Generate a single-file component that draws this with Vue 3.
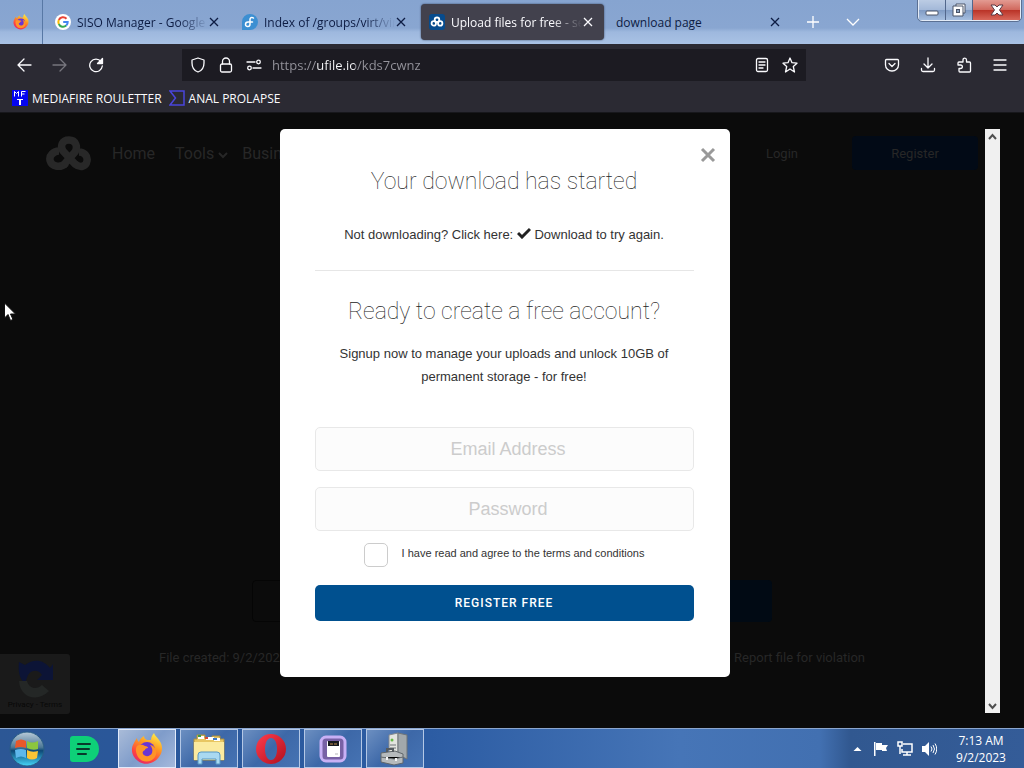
<script setup>
import { ref } from 'vue'

const tabs = [
  { title: 'SISO Manager - Google', icon: 'google' },
  { title: 'Index of /groups/virt/vir', icon: 'fedora' },
  { title: 'Upload files for free - set', icon: 'ufile', active: true },
  { title: 'download page' }
]

const apps = ['firefox', 'explorer', 'opera', 'device', 'server']

const url = ref('https://ufile.io/kds7cwnz')
const email = ref('')
const password = ref('')
const agreed = ref(false)
</script>

<template>
  <div class="desktop">
    <svg class="defs" width="0" height="0" aria-hidden="true">
      <defs>
        <linearGradient id="fire" x1="0.8" y1="0" x2="0.3" y2="1">
          <stop offset="0" stop-color="#fff04a" />
          <stop offset="0.4" stop-color="#ff9a22" />
          <stop offset="0.75" stop-color="#ff4540" />
          <stop offset="1" stop-color="#e62a66" />
        </linearGradient>
        <linearGradient id="orb" x1="0" y1="0" x2="0" y2="1">
          <stop offset="0" stop-color="#b9cbd8" />
          <stop offset="0.45" stop-color="#4d7896" />
          <stop offset="0.55" stop-color="#0d4876" />
          <stop offset="1" stop-color="#45d6fa" />
        </linearGradient>
        <linearGradient id="opera" x1="0" y1="0" x2="1" y2="1">
          <stop offset="0" stop-color="#ff3c4c" />
          <stop offset="1" stop-color="#b0101f" />
        </linearGradient>
        <symbol id="firefox" viewBox="0 0 32 32">
          <path fill="url(#fire)" d="M3 10c1-2 2-4 3-5 0 2 1 3 2 4 1-3 3-5 5-6 0 2 1 3 3 4h4c0-2 1-5 3-7 1 3 3 4 5 7 4 5 4 12 0 17-5 7-15 9-21 4-6-4-8-12-4-18z" />
          <circle cx="16" cy="17" r="8" fill="#6a35d3" />
          <path fill="#ff9427" d="M6 13c3-2 6-1 8 0 2 0 3 1 3 2-2 0-3 1-3 2-2 1-3 2-2 4 2 3 7 3 9-1 1-3 0-6-2-8 6 1 8 7 5 12-4 6-13 6-17 0-2-4-3-8-1-11z" />
        </symbol>
        <symbol id="clouds" viewBox="0 0 46 36">
          <g fill="none" stroke="currentColor" stroke-width="7.5" stroke-linejoin="round">
            <path d="M20 28c-3 3-6 4-10 3-6-1-8-8-4-12 2-2 4-3 7-3" />
            <path d="M17 31l4-5 8-9c3-5 1-12-6-12s-9 6-6 11l12 13c5 4 11 3 12-3 1-5-3-9-8-9" />
          </g>
        </symbol>
      </defs>
    </svg>

    <header class="tabbar">
      <button class="pinned" aria-label="Firefox View"><svg width="16" height="16"><use href="#firefox" /></svg></button>
      <div class="tabs">
        <div v-for="tab in tabs" :key="tab.title" class="tab" :class="{ active: tab.active }">
          <svg v-if="tab.icon === 'google'" class="favicon" viewBox="0 0 16 16">
            <circle cx="8" cy="8" r="8" fill="#fff" />
            <g fill="none" stroke-width="2">
              <path stroke="#ea4335" d="M11.5 4.8A4.7 4.7 0 0 0 3.8 6" />
              <path stroke="#fbbc05" d="M3.8 6a4.7 4.7 0 0 0 0 4" />
              <path stroke="#34a853" d="M3.8 10a4.7 4.7 0 0 0 7.4 1.6" />
              <path stroke="#4285f4" d="M11.2 11.6A4.6 4.6 0 0 0 12.7 8H8.2" />
            </g>
          </svg>
          <svg v-else-if="tab.icon === 'fedora'" class="favicon" viewBox="0 0 16 16">
            <path fill="#3c8fd2" d="M8 0a8 8 0 1 1 0 16H0V8a8 8 0 0 1 8-8z" />
            <path fill="none" stroke="#fff" stroke-width="1.5" stroke-linecap="round" d="M11.5 4C9.5 2.6 8 4 8 5.6v4.6c0 3-4.5 3-4.5.2C3.5 9 4.7 8 6 8h4.5" />
          </svg>
          <svg v-else-if="tab.icon === 'ufile'" class="favicon" viewBox="0 0 16 16">
            <rect width="16" height="16" rx="3" fill="#064b8d" />
            <g fill="none" stroke="#fff" stroke-width="1.8"><circle cx="8" cy="5.8" r="2.3" /><circle cx="4.8" cy="9.4" r="2.2" /><circle cx="11.2" cy="9.4" r="2.2" /></g>
          </svg>
          <span class="tab-title" :class="{ fade: tab.icon }">{{ tab.title }}</span>
          <button class="tab-close" aria-label="Close tab">
            <svg width="10" height="10" viewBox="0 0 10 10"><path d="M1 1l8 8M9 1L1 9" /></svg>
          </button>
        </div>
      </div>
      <button class="tab-tool" aria-label="New tab"><svg width="14" height="14" viewBox="0 0 14 14"><path d="M7 1v12M1 7h12" /></svg></button>
      <button class="tab-tool" aria-label="List all tabs"><svg width="14" height="14" viewBox="0 0 14 14"><path d="M1 4l6 6 6-6" /></svg></button>
      <div class="window-controls">
        <button aria-label="Minimize"><svg width="14" height="14" viewBox="0 0 14 14"><rect x="1" y="8" width="12" height="4" rx="1" fill="#fff" stroke="#4a5468" /></svg></button>
        <button aria-label="Restore">
          <svg width="14" height="14" viewBox="0 0 14 14" fill="#fff" stroke="#4a5468"><path d="M4 1h9v9h-2v3H1V3h3z" /><path fill="none" d="M4 3h7v7" /><rect x="4.5" y="6.5" width="3" height="3" fill="#8ba2c0" /></svg>
        </button>
        <button class="close-window" aria-label="Close"><svg width="14" height="14" viewBox="0 0 14 14"><path fill="#fff" stroke="#5a3a44" d="M1 2h4l2 2 2-2h4L9.5 7l3.5 5H9l-2-2-2 2H1l3.5-5z" /></svg></button>
      </div>
    </header>

    <nav class="toolbar">
      <button class="tool" aria-label="Back"><svg viewBox="0 0 16 16"><path d="M15 8H2M8 2L2 8l6 6" /></svg></button>
      <button class="tool dim" aria-label="Forward"><svg viewBox="0 0 16 16"><path d="M1 8h13M8 2l6 6-6 6" /></svg></button>
      <button class="tool" aria-label="Reload"><svg viewBox="0 0 16 16"><path d="M13 4.5A6.3 6.3 0 1 0 14.3 9" /><path fill="currentColor" d="M14.5 1.5v5h-5z" /></svg></button>
      <div class="urlbar">
        <button class="mini" aria-label="Tracking protection"><svg viewBox="0 0 16 16"><path d="M8 1l6 2v3c0 5-3 8-6 9-3-1-6-4-6-9V3z" /></svg></button>
        <button class="mini" aria-label="Site security"><svg viewBox="0 0 16 16"><rect x="2.500" y="7" width="11" height="8" rx="1.500" /><path d="M4.500 7V4.500a3.500 3.500 0 0 1 7 0V7" /></svg></button>
        <button class="mini" aria-label="Permissions"><svg viewBox="0 0 16 16"><path d="M1 5h8M7 11h8" /><circle cx="12.5" cy="5" r="1.8" /><circle cx="3.5" cy="11" r="1.8" /></svg></button>
        <input v-model="url" class="url" type="text" aria-label="Address">
        <button class="mini" aria-label="Reader view"><svg viewBox="0 0 16 16"><rect x="2.5" y="1.5" width="11" height="13" rx="1.5" /><path d="M5 5h6M5 8h6M5 11h4" /></svg></button>
        <button class="mini" aria-label="Bookmark"><svg viewBox="0 0 16 16"><path d="M8 1l2 4.7 5 .5-3.700 3.300L12.500 15 8 12l-4.500 3 1.200-5.500L1 6.200l5-.5z" /></svg></button>
      </div>
      <button class="tool" aria-label="Pocket"><svg viewBox="0 0 16 16"><path d="M2.500 2.500h11c.7 0 1 .4 1 1V8a6.500 6 0 0 1-13 0V3.500c0-.6.4-1 1-1z" /><path d="M5 6.500l3 3 3-3" /></svg></button>
      <button class="tool" aria-label="Downloads"><svg viewBox="0 0 16 16"><path d="M8 1v10M4 7l4 4 4-4M1.500 11.500v1.500c0 1 .5 1.500 1.500 1.500h10c1 0 1.500-.5 1.500-1.500v-1.500" /></svg></button>
      <button class="tool" aria-label="Extensions"><svg viewBox="0 0 16 16"><path d="M3 5h4V3c0-2.500 3.500-2.500 3.500 0v2h3c.6 0 1 .4 1 1v8c0 .6-.4 1-1 1H4c-.6 0-1-.4-1-1v-2.500h1.500c2.500 0 2.500-3.500 0-3.500H2V6c0-.6.4-1 1-1z" /></svg></button>
      <button class="tool" aria-label="Menu"><svg viewBox="0 0 16 16"><path d="M2 3h12M2 8h12M2 13h12" /></svg></button>
    </nav>

    <div class="bookmarks">
      <a href="#">
        <svg width="16" height="16" viewBox="0 0 16 16">
          <rect width="16" height="16" fill="#0505f0" />
          <path fill="none" stroke="#fff" stroke-width="1" d="M2.500 6.500v-5l2 2 2-2v5M9.500 6.500v-5h4M9.500 4h3M5 9.500h6" /><path stroke="#fff" stroke-width="2" d="M8 9v6" />
        </svg>
        MEDIAFIRE ROULETTER
      </a>
      <a href="#">
        <svg width="16" height="16" viewBox="0 0 16 16"><path fill="none" stroke="#4a45dc" stroke-width="1.500" d="M1 1h14v14H1l5.500-7z" /></svg>
        ANAL PROLAPSE
      </a>
    </div>

    <main class="page">
      <div class="site">
        <div class="site-nav">
          <svg class="logo" width="46" height="36"><use href="#clouds" /></svg>
          <a href="#" class="home">Home</a>
          <a href="#">Tools <svg width="10" height="8" viewBox="0 0 10 8"><path d="M1 2l4 4 4-4" fill="none" stroke="currentColor" stroke-width="2" /></svg></a>
          <a href="#">Business</a>
          <a href="#" class="login">Login</a>
          <button class="site-register">Register</button>
        </div>
        <div class="site-actions">
          <span class="share"></span>
          <span class="download"></span>
        </div>
        <div class="site-meta">
          <span>File created: 9/2/2023</span>
          <a href="#">Report file for violation</a>
        </div>
        <div class="captcha">
          <svg width="40" height="42" viewBox="0 0 40 42">
            <path fill="#0c1436" d="M4 4l6 3c9-7 19-5 25 3l3-4v16H22l5-5c-3-5-10-6-14 0l-3 8C4 21 3 12 4 4z" />
            <path fill="#242726" d="M4 23h8c2 8 10 9 15 4l7 6c-10 11-29 8-30-10z" />
          </svg>
          <span>Privacy - Terms</span>
        </div>
      </div>

      <div class="overlay">
        <section class="modal" role="dialog" aria-labelledby="started">
          <button class="modal-close" aria-label="Close dialog"><svg width="16" height="16" viewBox="0 0 16 16"><path d="M2 2l12 12M14 2L2 14" /></svg></button>
          <h2 id="started">Your download has started</h2>
          <p class="again">
            Not downloading? Click here:
            <a href="#"><svg width="14" height="12" viewBox="0 0 14 12"><path d="M1 6l4 4 8-8" /></svg> Download</a> to try again.
          </p>
          <hr>
          <h2>Ready to create a free account?</h2>
          <p class="signup">Signup now to manage your uploads and unlock 10GB of permanent storage - for free!</p>
          <form @submit.prevent>
            <input v-model="email" class="field" type="email" placeholder="Email Address" aria-label="Email Address">
            <input v-model="password" class="field" type="password" placeholder="Password" aria-label="Password">
            <div class="terms">
              <input id="terms" v-model="agreed" type="checkbox">
              <label for="terms">I have read and agree to the terms and conditions</label>
            </div>
            <button class="submit" type="submit">REGISTER FREE</button>
          </form>
        </section>
        <div class="scrollbar">
          <button aria-label="Scroll up"><svg width="9" height="8" viewBox="0 0 9 8"><path d="M1 6l3.500-4L8 6" /></svg></button>
          <button aria-label="Scroll down"><svg width="9" height="8" viewBox="0 0 9 8"><path d="M1 2l3.500 4L8 2" /></svg></button>
        </div>
      </div>
    </main>

    <footer class="taskbar">
      <button class="start" aria-label="Start">
        <svg width="36" height="36" viewBox="0 0 36 36">
          <circle cx="18" cy="18" r="17" fill="url(#orb)" stroke="#295d85" />
          <path fill="#e9582b" d="M7 10q5-3 10 0v7q-5-2-11 0z" />
          <path fill="#8cc63e" d="M18 10q5 3 11 0v8q-5 2-11-1z" />
          <path fill="#5eb8ec" d="M6 19q6-2 11 0v8q-5-3-10 0z" />
          <path fill="#fbc436" d="M18 19q5 3 11 1l-1 7q-5 3-10 0z" />
        </svg>
      </button>
      <button class="pin" aria-label="Notes">
        <svg width="30" height="28" viewBox="0 0 30 28"><path fill="#0ed078" d="M3 1h13a13 13 0 0 1 0 26H3q-3 0-3-3V4q0-3 3-3z" /><path stroke="#08392b" stroke-width="2" stroke-linecap="round" d="M8 9h12M7 14h12M8 19h8" /></svg>
      </button>
      <button v-for="app in apps" :key="app" class="app" :class="{ focused: app === 'firefox' }" :aria-label="app">
        <svg v-if="app === 'firefox'" width="32" height="32"><use href="#firefox" /></svg>
        <svg v-else-if="app === 'explorer'" width="34" height="32" viewBox="0 0 34 32">
          <path fill="#e8c662" stroke="#a88d43" d="M2 6h3V2h8v3h7V3h8v3h4v21H2z" />
          <path fill="#fff" d="M6 3h6v3H6zM14 4h8v3h-8zM22 5h6v3h-6z" />
          <path stroke="#3c9d48" stroke-width="2" d="M6 3h3" /><path stroke="#d94b35" stroke-width="2" d="M13 5h3" /><path stroke="#3c78c4" stroke-width="2" d="M21 6h4" />
          <path fill="#fbea9f" d="M2 9h30v18H2z" />
          <path fill="#a9d9f1" stroke="#5797c3" d="M6 31v-9q0-3 3-3h16q3 0 3 3v9h-4v-5H10v5z" />
        </svg>
        <svg v-else-if="app === 'opera'" width="32" height="32" viewBox="0 0 32 32">
          <path fill="url(#opera)" fill-rule="evenodd" d="M16 1a15 15 0 1 0 0 30 15 15 0 0 0 0-30zm0 4c4 0 6 5 6 11s-2 11-6 11-6-5-6-11 2-11 6-11z" />
        </svg>
        <svg v-else-if="app === 'device'" width="28" height="28" viewBox="0 0 28 28">
          <rect x="2" y="2" width="24" height="24" rx="5" fill="#7861a5" stroke="#c8b0f5" stroke-width="3" />
          <rect x="8" y="6" width="13" height="16" rx="1" fill="#fff" /><rect x="9" y="6" width="11" height="5" fill="#17191e" />
          <path stroke="#c28d4b" d="M11 9h3M15 9h3" /><path stroke="#b7b7ba" d="M16 19h3" />
        </svg>
        <svg v-else width="34" height="34" viewBox="0 0 34 34">
          <path fill="#e3e4df" stroke="#84898d" d="M11 3l9-2v22l-9 2z" /><path fill="#a2a8ab" stroke="#6f7579" d="M20 1l9 2v24l-9-4z" />
          <circle cx="14" cy="8" r="1.5" fill="#65b944" /><path stroke="#6f7579" d="M12 13h6M12 16h6" />
          <path fill="#b6babc" stroke="#60666a" d="M3 21l14-2 8 3v9l-9 2-13-3z" /><path fill="none" stroke="#555b60" stroke-width="2" d="M9 20v-3h6v3" />
          <path stroke="#6c7175" d="M3 25l13 2 9-2" /><path stroke="#f3f3f3" stroke-width="2" d="M9 25v3M18 26v3" />
        </svg>
      </button>
      <div class="tray">
        <button aria-label="Show hidden icons"><svg width="9" height="6" viewBox="0 0 9 6"><path fill="#fff" d="M4.500 1L8.500 5h-8z" /></svg></button>
        <button aria-label="Action Center"><svg width="16" height="16" viewBox="0 0 16 16"><path fill="#fff" d="M1 1h1.500v14H1zM3 2h6v7H3zM9 4h6l-2 3 1 3H9z" /></svg></button>
        <button aria-label="Network"><svg width="16" height="16" viewBox="0 0 16 16" fill="none" stroke="#fff" stroke-width="1.500"><path d="M6 3h9v8H5V8M10 11v3M6 14h8" /><rect x="1" y="1" width="4" height="4" /><path d="M3 5v8" /></svg></button>
        <button aria-label="Volume"><svg width="16" height="16" viewBox="0 0 16 16"><path fill="#fff" d="M1 5h3l4-4v14l-4-4H1z" /><path fill="none" stroke="#fff" d="M10 5.500q2 2.500 0 5M12 4q3 4 0 8M14 2.500q3.500 5.500 0 11" /></svg></button>
        <div class="clock">
          <time>7:13 AM</time>
          <time>9/2/2023</time>
        </div>
      </div>
    </footer>

    <svg class="cursor" width="12" height="20" viewBox="0 0 12 20"><path fill="#fff" stroke="#111" d="M.5 1v15l3.500-3.500L6.500 18.500l2.500-1L6.500 12h5z" /></svg>
  </div>
</template>

<style>
html,
body {
  margin: 0;
  background: #0b0b0b;
}
</style>

<style scoped>
.desktop {
  position: relative;
  display: flex;
  flex-direction: column;
  min-height: 100vh;
  font-family: "Open Sans", "Noto Sans", sans-serif;
  font-size: 12px;
}

.desktop *,
.desktop *::before {
  box-sizing: border-box;
}

.defs { position: absolute; }

button {
  display: flex;
  align-items: center;
  justify-content: center;
  flex: none;
  padding: 0;
  border: 0;
  background: none;
  color: inherit;
  font: inherit;
}

a {
  color: inherit;
  text-decoration: none;
}

svg { flex: none; }

.tabbar {
  display: flex;
  height: 44px;
  background: linear-gradient(#86a4d0, #89a6d1 28px, #9eb8de 32px, #a9c2e5);
  color: #0d1c43;
}

.pinned {
  width: 43px;
  border-right: 1px solid #5878a5;
}

.tabs {
  display: flex;
  gap: 4px;
  flex: 0 1 750px;
  min-width: 0;
  padding: 4px 0 4px 4px;
}

.tab {
  display: flex;
  align-items: center;
  flex: 0 1 183px;
  min-width: 0;
  padding: 0 10px 0 8px;
  border-radius: 4px;
}

.tab.active {
  background: #42414d;
  color: #fbfbfe;
  box-shadow: 0 0 2px #33405c;
}

.favicon {
  width: 16px;
  height: 16px;
  margin-right: 6px;
}

.tab-title {
  flex: 1;
  overflow: hidden;
  white-space: nowrap;
}

.tab-title.fade { mask-image: linear-gradient(to left, transparent, #000 30px); }

.tab-close {
  width: 12px;
  height: 20px;
}

.tab-close path,
.tab-tool path {
  fill: none;
  stroke: currentColor;
  stroke-width: 1.3;
}

.tab-tool {
  width: 40px;
  color: #fff;
}

.window-controls {
  display: flex;
  height: 21px;
  margin: 0 3px 0 auto;
  border: 1px solid #e3ebf7;
  border-top: 0;
  border-radius: 0 0 4px 4px;
  outline: 1px solid #5b7093;
}

.window-controls button {
  width: 27px;
  background: linear-gradient(#bccce4, #a3b8d8 50%, #7f9bc4 50%, #a5bedf);
  border-right: 1px solid #52678c;
}

.window-controls .close-window {
  width: 47px;
  border: 0;
  background: linear-gradient(#e39b92, #d0675c 50%, #b93226 50%, #d8675a);
}

.toolbar {
  display: flex;
  align-items: center;
  height: 42px;
  padding: 0 6px;
  background: #2b2a33;
  color: #fbfbfe;
}

.tool {
  width: 36px;
  height: 32px;
}

.tool.dim { color: #77767e; }

.toolbar svg {
  width: 16px;
  height: 16px;
  fill: none;
  stroke: currentColor;
  stroke-width: 1.3;
  stroke-linecap: round;
  stroke-linejoin: round;
}

.urlbar {
  display: flex;
  align-items: center;
  flex: 1;
  min-width: 0;
  height: 32px;
  margin: 0 68px;
  padding: 0 2px;
  background: #1c1b22;
}

.mini {
  width: 28px;
  height: 28px;
}

.url {
  flex: 1;
  min-width: 0;
  padding: 0 4px;
  border: 0;
  outline: 0;
  /* the domain is lit, scheme and path stay grey */
  background: linear-gradient(to right, #96959d 48px, #fbfbfe 48px 87px, #96959d 87px);
  background-clip: text;
  color: transparent;
  font: 13px "Open Sans", "Noto Sans", sans-serif;
}

.bookmarks {
  display: flex;
  gap: 7px;
  height: 27px;
  padding: 0 12px 2px;
  background: #2b2a33;
  border-bottom: 1px solid #17171b;
  color: #fbfbfe;
}

.bookmarks a {
  display: flex;
  align-items: center;
  gap: 4px;
}

.page {
  position: relative;
  display: flex;
  flex: 1;
  background: #0b0b0b;
}

.site {
  display: flex;
  flex-direction: column;
  flex: 1;
  color: #272727;
  font-family: Roboto, sans-serif;
}

.site-nav {
  display: flex;
  align-items: center;
  gap: 14px;
  padding: 22px 46px 0;
  font-size: 16px;
}

.logo { color: #282828; }

.home { margin: 0 6px; }

.login {
  margin-left: auto;
  margin-right: 40px;
  font-size: 13px;
}

.site-register {
  width: 126px;
  height: 34px;
  border-radius: 4px;
  background: #020a16;
  font-size: 13px;
}

.site-actions {
  display: flex;
  justify-content: space-between;
  margin-top: auto;
  padding: 0 252px;
}

.site-actions span {
  width: 180px;
  height: 42px;
  border-radius: 4px;
}

.share { border: 1px solid #050505; }

.download { background: #010a14; }

.site-meta {
  display: flex;
  justify-content: space-between;
  padding: 28px 159px 63px;
  font-size: 13px;
  line-height: 15px;
}

.captcha {
  position: absolute;
  left: 0;
  bottom: 14px;
  display: flex;
  flex-direction: column;
  align-items: center;
  width: 70px;
  height: 60px;
  padding-top: 4px;
  border-radius: 0 3px 3px 0;
  background: #1a1a1a;
  color: #080808;
  font-size: 8px;
}

.overlay {
  position: absolute;
  inset: 0;
  display: flex;
  padding: 16px 24px 15px;
}

.modal {
  position: relative;
  align-self: flex-start;
  width: 450px;
  margin: 0 auto;
  padding: 38px 36px 56px 35px;
  border-radius: 5px;
  background: #fff;
  color: #333;
  font-family: "Liberation Sans", Arial, sans-serif;
  text-align: center;
}

.modal-close {
  position: absolute;
  top: 16px;
  right: 12px;
  width: 20px;
  height: 20px;
}

.modal-close path {
  stroke: #999;
  stroke-width: 3;
}

.modal h2 {
  margin: 0;
  color: #222;
  font: 100 23px/30px Roboto, sans-serif;
}

.modal p {
  margin: 0;
  font-size: 13px;
  line-height: 23px;
}

.modal .again { margin-top: 26px; }

.again path {
  fill: none;
  stroke: #222;
  stroke-width: 3;
}

.modal hr {
  margin: 24px 0 26px;
  border: 0;
  border-top: 1px solid #e6e6e6;
}

.modal .signup {
  margin: 15px 15px 39px;
}

form {
  display: flex;
  flex-direction: column;
}

.field {
  width: 100%;
  height: 44px;
  margin-bottom: 16px;
  padding: 0 10px 0 18px;
  border: 1px solid #e8e8e8;
  border-radius: 5px;
  background: #fcfcfc;
  color: #333;
  font: 18px "Liberation Sans", Arial, sans-serif;
  text-align: center;
}

.field + .field { margin-bottom: 12px; }

.field::placeholder {
  color: #ccc;
  opacity: 1;
}

.terms {
  display: flex;
  justify-content: center;
  gap: 14px;
  margin-bottom: 18px;
  font-size: 11px;
  line-height: 20px;
}

.terms input {
  appearance: none;
  width: 24px;
  height: 24px;
  margin: 0;
  border: 1px solid #ccc;
  border-radius: 5px;
  background: #fff;
}

.terms input:checked { background: #00508f; }

.submit {
  height: 36px;
  border-radius: 5px;
  background: #00508f;
  color: #fff;
  font: 500 12px Roboto, sans-serif;
  letter-spacing: 1px;
}

.scrollbar {
  display: flex;
  flex-direction: column;
  justify-content: space-between;
  width: 15px;
  background: #f0f0f0;
}

.scrollbar button {
  width: 15px;
  height: 15px;
}

.scrollbar path {
  fill: none;
  stroke: #505050;
  stroke-width: 2;
}

.taskbar {
  display: flex;
  height: 40px;
  border-top: 1px solid #8ba6cf;
  background: linear-gradient(to right, #2c5795, #2a5799 110px, #2c5ca3 430px, #4675b7 680px, #4270b1 820px, #315890 850px, #345c98);
  color: #fff;
}

.start { width: 54px; }

.pin {
  width: 62px;
  margin-right: 2px;
}

.app {
  width: 58px;
  margin-right: 4px;
  border: 1px solid #b4c8e6;
  background: linear-gradient(135deg, #6c8fc1, #3d68a8 50%, #4673b3);
}

.app.focused {
  border-color: #e1eafa;
  background: linear-gradient(135deg, #a9bbd8, #7f9cca 50%, #a4b9dc);
}

.tray {
  display: flex;
  align-items: center;
  margin-left: auto;
}

.tray button { width: 24px; }

.clock {
  display: flex;
  flex-direction: column;
  width: 80px;
  margin-right: 3px;
  line-height: 17px;
  text-align: center;
}

.cursor {
  position: absolute;
  left: 4px;
  top: 302px;
}
</style>
